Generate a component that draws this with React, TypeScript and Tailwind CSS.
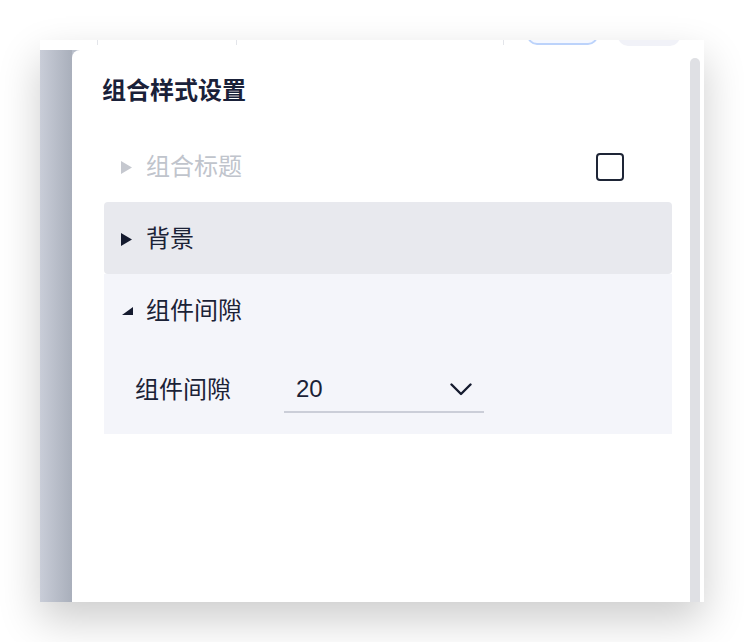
import React from 'react';

const FONT = "font-['Liberation_Sans','Noto_Sans_CJK_SC',sans-serif]";

const TriangleRight = ({ color }: { color: string }) => (
  <svg width="11" height="13" viewBox="0 0 11 13" className="shrink-0">
    <polygon points="0,0 11,6.5 0,13" fill={color} />
  </svg>
);

const TriangleOpen = () => (
  <svg width="11" height="8" viewBox="0 0 11 8" className="shrink-0">
    <polygon points="11,0 11,8 0,8" fill="#151b2f" />
  </svg>
);

const App: React.FC = () => {
  return (
    <div className={`w-[744px] h-[642px] bg-white pt-[40px] pl-[40px] ${FONT}`}>
      <div className="w-[664px] h-[562px] flex flex-col bg-white shadow-[0_18px_40px_rgba(0,0,0,0.2)]">
        {/* background toolbar, mostly hidden */}
        <div className="h-[10px] flex items-start overflow-hidden bg-white">
          <div className="ml-[57px] w-px h-[5px] bg-[#e3e5ea]" />
          <div className="ml-[138px] w-px h-[5px] bg-[#e3e5ea]" />
          <div className="ml-[266px] w-px h-[5px] bg-[#e3e5ea]" />
          <div className="ml-[23px] w-[71px] h-[20px] -mt-[15px] rounded-full border-2 border-[#bcd3fb] bg-[#f5f8ff] shrink-0" />
          <div className="ml-[20px] w-[62px] h-[20px] -mt-[14px] rounded-full bg-[#f1f2f8] shrink-0" />
        </div>

        <div className="flex-1 flex bg-[#b9bfcb]">
          {/* left gray strip */}
          <div className="w-[32px] bg-gradient-to-r from-[#c9cdd8] to-[#a9afbb]" />

          {/* panel */}
          <div className="flex-1 bg-white rounded-tl-[8px] pl-[32px] pr-[18px]">
            <div className="h-[80px] pt-[25px] -ml-[2px]">
              <h2 className="text-[24px] leading-[32px] font-bold text-[#1a2139]">组合样式设置</h2>
            </div>

            {/* 组合标题 */}
            <div className="h-[72px] flex items-center justify-between pl-[17px] pr-[48px] pt-[2px]">
              <div className="flex items-center gap-[14px]">
                <TriangleRight color="#c5c8cf" />
                <span className="text-[24px] text-[#c0c4cc]">组合标题</span>
              </div>
              <div className="w-[28px] h-[28px] rounded-[4px] border-[2.5px] border-[#1e2536]" />
            </div>

            {/* 背景 */}
            <div className="h-[72px] flex items-center gap-[14px] pl-[17px] pt-[2px] bg-[#e8e9ee] rounded-[4px]">
              <TriangleRight color="#141a2e" />
              <span className="text-[24px] text-[#1b2236]">背景</span>
            </div>

            {/* 组件间隙 */}
            <div className="bg-[#f4f5fa]">
              <div className="h-[72px] flex items-center gap-[13px] pl-[18px] pt-[2px]">
                <TriangleOpen />
                <span className="text-[24px] text-[#1b2236]">组件间隙</span>
              </div>
              <div className="h-[88px] flex items-center pl-[31px]">
                <span className="w-[149px] text-[24px] text-[#1b2236]">组件间隙</span>
                <div className="w-[200px] h-[46px] flex items-center justify-between pl-[12px] pr-[12px] border-b-2 border-[#cbced8]">
                  <span className="text-[24px] text-[#1b2236]">20</span>
                  <svg width="22" height="13" viewBox="0 0 22 13">
                    <path d="M1.5 1.5 L11 11 L20.5 1.5" fill="none" stroke="#151b2f" strokeWidth="2.4" strokeLinecap="round" strokeLinejoin="round" />
                  </svg>
                </div>
              </div>
            </div>
          </div>

          {/* scrollbar */}
          <div className="w-[14px] bg-white flex pt-[8px] pr-[4px]">
            <div className="w-[10px] flex-1 rounded-t-full bg-[#dfe0e4]" />
          </div>
        </div>
      </div>
    </div>
  );
};

export default App;
